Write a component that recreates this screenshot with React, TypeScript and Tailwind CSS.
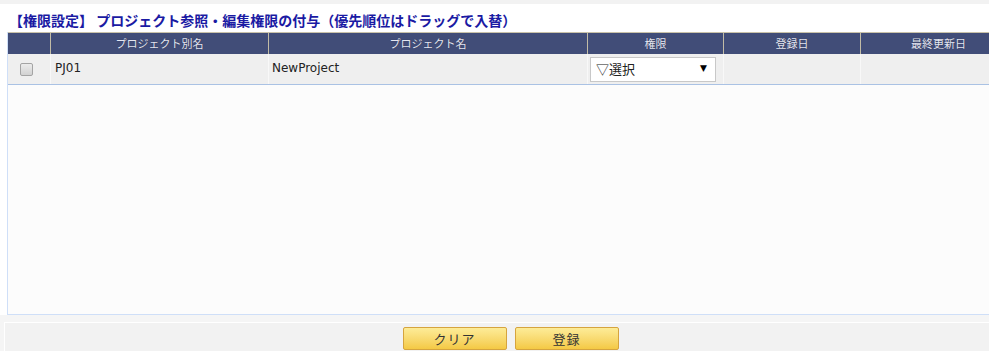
import React from "react";

const font = { fontFamily: '"DejaVu Sans", "Noto Sans CJK JP", sans-serif' };

function HeaderCell({ w, children, last }: { w: string; children?: React.ReactNode; last?: boolean }) {
  return (
    <div
      className={`${w} h-full flex items-center justify-center text-[11px] text-[#e4e6f2] ${last ? "" : "border-r border-[#c2bca6]"}`}
      style={{ fontFamily: '"Noto Sans CJK JP", sans-serif', textShadow: "0 0 1px rgba(0,0,0,0.4)" }}
    >
      {children}
    </div>
  );
}

export default function App() {
  return (
    <div className="w-[989px] h-[351px] overflow-hidden bg-white" style={font}>
      <div className="w-[1020px]">
        <div className="h-[4px] bg-[#f2f2f2]" />
        <div
          className="h-[28px] pl-[9px] pt-[7px] text-[14px] leading-[18px] font-bold text-[#1a1aa3] whitespace-nowrap"
          style={{ fontFamily: '"Noto Sans CJK JP", sans-serif' }}
        >
          【権限設定】 プロジェクト参照・編集権限の付与（優先順位はドラッグで入替）
        </div>
        <div className="ml-[7px] h-[283px] border-l border-b border-[#cfdff8] bg-[#fcfcfc] flex flex-col">
          <div className="h-[22px] flex bg-[#414d78] border-t border-[#c9c2a9]">
            <HeaderCell w="w-[43px]" />
            <HeaderCell w="w-[218px]">プロジェクト別名</HeaderCell>
            <HeaderCell w="w-[319px]">プロジェクト名</HeaderCell>
            <HeaderCell w="w-[136px]">権限</HeaderCell>
            <HeaderCell w="w-[137px]">登録日</HeaderCell>
            <HeaderCell w="w-[155px]" last>最終更新日</HeaderCell>
          </div>
          <div className="h-[31px] flex bg-[#efefef] border-b border-[#aac2e4] text-[12px] text-[#222]">
            <div className="w-[43px] border-r border-[#f8f8f8] flex items-center pl-[12px]">
              <div className="w-[13px] h-[13px] rounded-[2px] border border-[#a4a4a4] bg-gradient-to-b from-[#ececec] to-[#d2d2d2]" />
            </div>
            <div className="w-[218px] border-r border-[#f8f8f8] flex items-center pl-[4px] pb-[2px]">PJ01</div>
            <div className="w-[319px] border-r border-[#f8f8f8] flex items-center pl-[3px] pb-[2px]">NewProject</div>
            <div className="w-[136px] border-r border-[#f8f8f8] flex items-center pl-[2px]">
              <div className="w-[126px] h-[25px] bg-white border border-[#c8c8c8] flex items-center justify-between pl-[5px] pr-[8px]">
                <span className="text-[13px] text-[#222]" style={{ fontFamily: '"Noto Sans CJK JP", sans-serif' }}>▽選択</span>
                <span className="text-[9px] text-black">▼</span>
              </div>
            </div>
            <div className="w-[137px] border-r border-[#f8f8f8]" />
            <div className="w-[155px]" />
          </div>
          <div className="flex-1" />
        </div>
        <div className="h-[36px] bg-[#f5f5f5] pt-[7px]">
          <div className="ml-[4px] w-[1012px] h-[29px] border-t border-l border-white bg-[#f2f2f2] pt-[4px] flex justify-center gap-[8px]">
            <button
              className="w-[104px] h-[23px] rounded-[2px] border border-[#d6a43e] bg-gradient-to-b from-[#fdec97] to-[#f4c943] text-[13px] text-[#333] tracking-[1px] flex items-center justify-center"
              style={{ fontFamily: '"Noto Sans CJK JP", sans-serif' }}
            >
              クリア
            </button>
            <button
              className="w-[104px] h-[23px] rounded-[2px] border border-[#d6a43e] bg-gradient-to-b from-[#fdec97] to-[#f4c943] text-[13px] text-[#333] tracking-[1px] flex items-center justify-center"
              style={{ fontFamily: '"Noto Sans CJK JP", sans-serif' }}
            >
              登録
            </button>
          </div>
        </div>
      </div>
    </div>
  );
}
